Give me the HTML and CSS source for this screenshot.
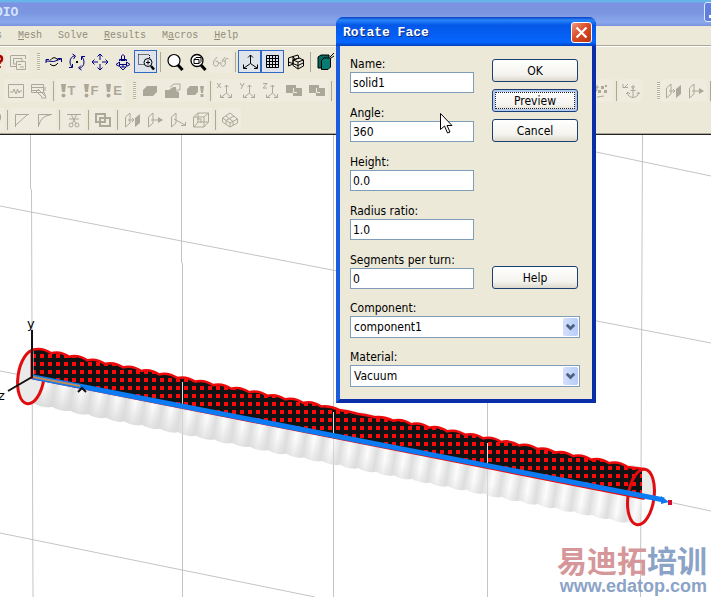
FILE: index.html
```html
<!DOCTYPE html>
<html lang="en">
<head>
<meta charset="utf-8">
<title>Rotate Face</title>
<link rel="stylesheet" href="styles.css">
</head>
<body>
<svg class="sprite" aria-hidden="true">
  <symbol id="i-help" viewBox="0 0 18 18"><path d="M10 6Q10 3 13 3Q16 3 16 6Q16 8 13.500 9V11M13.500 13V15" stroke="#b00000" stroke-width="2.500" fill="none"/></symbol>
  <symbol id="i-windows" viewBox="0 0 18 18"><path d="M1.500 3V13.500H7M1.500 2.500H16.500V6M4.500 5.500H13V9M4.500 5.500V11H7M7.500 8.500H16.500V16.500H7.500ZM9 11.500H12M11 14H15" class="k"/></symbol>
  <symbol id="i-orbit" viewBox="0 0 18 18"><path d="M1 8Q9 10 16 6M12.500 5.500H16.500V9M1 10V6.500H4" class="n"/><path d="M5 7.500Q9 2 13 7M5 11Q9 15 13 10" class="k2"/></symbol>
  <symbol id="i-spin" viewBox="0 0 18 18"><path d="M7 2.500Q2 4 2 9Q2 12 4 14M11 15.500Q16 14 16 9Q16 6 14 4M4.500 1L7.500 3L5.500 6M13 12.500L10.500 15L13.500 17M1 14.500H4.500V11M13.500 7V3.500H17" class="n"/><path d="M8 8H10V10H8Z" fill="#000"/></symbol>
  <symbol id="i-pan" viewBox="0 0 18 18"><path d="M9 1V7M9 11V17M1 9H7M11 9H17M6.500 3.500L9 1L11.500 3.500M6.500 14.500L9 17L11.500 14.500M3.500 6.500L1 9L3.500 11.500M14.500 6.500L17 9L14.500 11.500" class="n"/></symbol>
  <symbol id="i-plane" viewBox="0 0 18 18"><path d="M9 17L6 14H12ZM9 14V12M2 11.500L5.500 9V13.500ZM16 11.500L12.500 9V13.500ZM6 11.500H12M6.500 7.500H11.500M7.500 6V3Q9 0 10.500 3V6M5.500 8V6.500H12.500V8" class="n"/></symbol>
  <symbol id="i-zoombox" viewBox="0 0 18 18"><path d="M1.500 1.500H12M1.500 1.500V11.500H7M12.500 2V5" stroke="#000" stroke-dasharray="1 1" fill="none"/><circle cx="11" cy="9.500" r="4" class="k2"/><path d="M9 9.500H13M11 7.500V11.500" class="k2"/><path d="M14 13L17 16.500" stroke="#000" stroke-width="2.500"/></symbol>
  <symbol id="i-zoom" viewBox="0 0 18 18"><circle cx="8" cy="7.500" r="6" fill="#fff" stroke="#000" stroke-width="1.200"/><path d="M12 12L16.500 17" stroke="#000" stroke-width="3"/></symbol>
  <symbol id="i-zoomall" viewBox="0 0 18 18"><circle cx="8" cy="7.500" r="6" fill="#fff" stroke="#000" stroke-width="1.300"/><path d="M12 12L16.500 17" stroke="#000" stroke-width="3"/><path d="M5 6.500H10V10.500H5ZM5 6.500L7 4.500H12V8.500L10 10.500" class="k2"/></symbol>
  <symbol id="i-glasses" viewBox="0 0 18 18"><path d="M1 9L5 4M3.500 8.500Q6 7 6.500 10Q6 14 3 13Q0 12 2 9M10 8.500Q13 7 13.500 10Q13 14 10 13Q8 12 9 9M6.500 10H8.500M13 9Q13 4 16.500 6M10 8L13 4" class="k"/></symbol>
  <symbol id="i-axes" viewBox="0 0 18 18"><path d="M9.500 2V10.500L3 15M9.500 10.500L16 15M7 4.500L9.500 2L12 4.500M2.500 11.500V15.500H6M16.500 11.500V15.500H13" class="k2"/></symbol>
  <symbol id="i-grid" viewBox="0 0 18 18"><path d="M2.500 2.500H14.500V14.500H2.500ZM5.500 2V15M8.500 2V15M11.500 2V15M2 5.500H15M2 8.500H15M2 11.500H15" class="k2"/></symbol>
  <symbol id="i-cube" viewBox="0 0 18 18"><path d="M1.500 5L6 3.500V11L1.500 13ZM6 3.500L11 2L12 5L8 6.500ZM6 7L12 5L16.500 7V13L11 16L6 12.500ZM11 9V16M6 7L11 9L16.500 7M1.500 9L11 12.500L16 10" class="k2"/></symbol>
  <symbol id="i-solidcut" viewBox="0 0 18 18"><path d="M2 4L5 2H13V11L11 15H2Z" fill="#00675f" stroke="#000"/><path d="M5.500 7.500L8 5H14.500V14L12 16.500H5.500Z" fill="#087b72" stroke="#000"/><path d="M14 4L18 0M15 5L18 3" class="k2"/></symbol>
  <symbol id="i-wave" viewBox="0 0 18 18"><path d="M1.500 2.500H16.500V15.500H1.500ZM3 10H6L7 7L9 12L10.500 7L12 11L13 9H15" class="k"/></symbol>
  <symbol id="i-probe" viewBox="0 0 18 18"><path d="M1.500 2.500H13.500V10.500H1.500ZM2 5.500H13M2 8.500H10M8 7L15 14M6 9L12 15M14 10L16 16L11 16M15 5V9" class="k"/></symbol>
  <symbol id="i-bang" viewBox="0 0 7 18"><path d="M1 2H6L5 10H2Z" class="f"/><circle cx="3.500" cy="13.500" r="2" class="f"/></symbol>
  <symbol id="i-brick" viewBox="0 0 18 18"><path d="M2 8L6 4H16V10L12 14H2Z" class="f"/></symbol>
  <symbol id="i-brickedit" viewBox="0 0 18 18"><path d="M1 8H5L9 5H12V9L15 10V16H1Z" class="f"/><path d="M6 5L10 2H16V8L12 8" class="k"/></symbol>
  <symbol id="i-brickbang" viewBox="0 0 18 18"><path d="M0 7L3 4H11V10L8 13H0ZM13 4H17L16 11H14ZM13.500 12H16.500V15H13.500Z" class="f"/></symbol>
  <symbol id="i-ax" viewBox="0 0 18 18"><path d="M10.500 3V11L5 15.500M10.500 11L15 15.500M8.500 5L10.500 3L12.500 5M4.500 12.500V15.500H8M12 15.500H15.500V12" class="k"/></symbol>
  <symbol id="i-x" viewBox="0 0 18 18"><path d="M1 1L5 6M5 1L1 6" class="k"/><use href="#i-ax"/></symbol>
  <symbol id="i-y" viewBox="0 0 18 18"><path d="M1 1L3 4M5 1L2 7" class="k"/><use href="#i-ax"/></symbol>
  <symbol id="i-z" viewBox="0 0 18 18"><path d="M1 1.500H5L1 6H5" class="k"/><use href="#i-ax"/></symbol>
  <symbol id="i-bool" viewBox="0 0 18 18"><path d="M1 3H11V6H17V14H8V11H1Z" class="f"/><path d="M3 12V15H6M8.500 6V10.500H12" class="w"/></symbol>
  <symbol id="i-points" viewBox="0 0 18 18"><path d="M1 6L6 5M4 3V8L1 12M4 15L11 14" class="k"/><path d="M8 4h3v3h-3zM5 8h3v3h-3zM11 8h3v3h-3zM12 3h2v2h-2z" class="f"/></symbol>
  <symbol id="i-anchor" viewBox="0 0 18 18"><path d="M1 2V6M1 5.500H6M2 6L6 2M11 6V15M8.500 8.500H13.500M5.500 11Q6 15 11 15.500Q16 15 16.500 11M10 4H12V6H10ZM4 12L6 10L8 12M14.500 12L16.500 10L17.500 12" class="k"/></symbol>
  <symbol id="i-chamfer" viewBox="0 0 18 18"><path d="M2.500 16V3.500H16M3 14L14 4" class="k"/></symbol>
  <symbol id="i-blend" viewBox="0 0 18 18"><path d="M2.500 16V3.500H16M3 14Q5 5 14 4" class="k"/></symbol>
  <symbol id="i-cut" viewBox="0 0 18 18"><path d="M2 3.500H16M6 3L11 13M12 3L7 13M4 8H14" class="k"/><circle cx="6" cy="14" r="2" class="k"/><circle cx="12" cy="14" r="2" class="k"/></symbol>
  <symbol id="i-union" viewBox="0 0 18 18"><path d="M2 3H11V11H2ZM6 7H16V15H6Z" class="k b"/></symbol>
  <symbol id="i-extrude" viewBox="0 0 18 18"><path d="M2.500 6L7 2V12L2.500 16ZM5 9H11M9 7L11 9L9 11" class="k"/><path d="M12 7L17 3V12L12 16Z" class="f"/></symbol>
  <symbol id="i-arrow" viewBox="0 0 18 18"><path d="M2.500 6L7 2V12L2.500 16ZM5 9H16" class="k"/><path d="M12 6L17 9L12 12Z" class="f"/></symbol>
  <symbol id="i-arrowdn" viewBox="0 0 18 18"><path d="M2.500 6L7 2V12L2.500 16ZM5 8L16 14M12 14.500H16.500V11" class="k"/></symbol>
  <symbol id="i-box" viewBox="0 0 18 18"><path d="M1.500 6H12V16H1.500ZM1.500 6L6 2H16.500V11L12 16M12 6L16.500 2M6 2V11H16M6 11L2 16M5 8H9V12" class="k"/></symbol>
  <symbol id="i-hex" viewBox="0 0 18 18"><path d="M1.500 7L9 2L16.500 8V12L9 16L1.500 11ZM1.500 7L9 12L16.500 8M9 12V16M5 5L12 10.500V14M13 5L5 9.500V13" class="k"/></symbol>
  <symbol id="i-slash" viewBox="0 0 18 18"><path d="M11 11L17 3V8L13 15Z" class="f"/></symbol>
</svg>

<div class="app">
  <header class="titlebar"><span>DIO</span><button class="winbtn" aria-label="Minimize"></button></header>
  <nav class="menu">
    <a href="#">s</a><a href="#"><u>M</u>esh</a><a href="#">Solve</a><a href="#"><u>R</u>esults</a><a href="#">M<u>a</u>cros</a><a href="#"><u>H</u>elp</a>
  </nav>
  <div class="bars">
    <div class="bar first">
      <button class="tool" aria-label="Context help"><svg><use href="#i-help"/></svg></button>
      <button class="tool off" aria-label="Windows"><svg><use href="#i-windows"/></svg></button>
      <i class="grip"></i>
      <button class="tool" aria-label="Orbit"><svg><use href="#i-orbit"/></svg></button>
      <button class="tool" aria-label="Spin"><svg><use href="#i-spin"/></svg></button>
      <button class="tool" aria-label="Pan"><svg><use href="#i-pan"/></svg></button>
      <button class="tool" aria-label="Move view"><svg><use href="#i-plane"/></svg></button>
      <button class="tool on" aria-label="Zoom area"><svg><use href="#i-zoombox"/></svg></button>
      <i class="sep"></i>
      <button class="tool" aria-label="Zoom"><svg><use href="#i-zoom"/></svg></button>
      <button class="tool" aria-label="Zoom all"><svg><use href="#i-zoomall"/></svg></button>
      <button class="tool off" aria-label="View options"><svg><use href="#i-glasses"/></svg></button>
      <i class="sep"></i>
      <button class="tool on" aria-label="Axes"><svg><use href="#i-axes"/></svg></button>
      <button class="tool on" aria-label="Grid"><svg><use href="#i-grid"/></svg></button>
      <button class="tool" aria-label="Wireframe"><svg><use href="#i-cube"/></svg></button>
      <i class="sep"></i>
      <button class="tool" aria-label="Cutting plane"><svg><use href="#i-solidcut"/></svg></button>
    </div>
    <div class="bar second">
      <button class="tool off" aria-label="Signal"><svg><use href="#i-wave"/></svg></button>
      <button class="tool off" aria-label="Probe"><svg><use href="#i-probe"/></svg></button>
      <i class="sep"></i>
      <button class="tool off solver"><svg><use href="#i-bang"/></svg>T</button>
      <button class="tool off solver"><svg><use href="#i-bang"/></svg>F</button>
      <button class="tool off solver"><svg><use href="#i-bang"/></svg>E</button>
      <i class="grip"></i>
      <button class="tool off" aria-label="Material"><svg><use href="#i-brick"/></svg></button>
      <button class="tool off" aria-label="Edit material"><svg><use href="#i-brickedit"/></svg></button>
      <button class="tool off" aria-label="Check material"><svg><use href="#i-brickbang"/></svg></button>
      <i class="sep"></i>
      <button class="tool off" aria-label="Align x"><svg><use href="#i-x"/></svg></button>
      <button class="tool off" aria-label="Align y"><svg><use href="#i-y"/></svg></button>
      <button class="tool off" aria-label="Align z"><svg><use href="#i-z"/></svg></button>
      <button class="tool off" aria-label="Add"><svg><use href="#i-bool"/></svg></button>
      <button class="tool off" aria-label="Insert"><svg><use href="#i-bool"/></svg></button>
      <i class="sep"></i>
      <i class="gap"></i>
      <button class="tool off" aria-label="Pick points"><svg><use href="#i-points"/></svg></button>
      <i class="sep"></i>
      <button class="tool off" aria-label="Anchor"><svg><use href="#i-anchor"/></svg></button>
      <i class="grip far"></i>
      <button class="tool off" aria-label="Extrude"><svg><use href="#i-extrude"/></svg></button>
      <button class="tool off" aria-label="Move face"><svg><use href="#i-arrow"/></svg></button>
      <i class="sep"></i>
    </div>
    <div class="bar third">
      <button class="tool off" aria-label="Face"><svg><use href="#i-slash"/></svg></button>
      <i class="sep"></i>
      <button class="tool off" aria-label="Chamfer"><svg><use href="#i-chamfer"/></svg></button>
      <button class="tool off" aria-label="Blend"><svg><use href="#i-blend"/></svg></button>
      <i class="sep"></i>
      <button class="tool off" aria-label="Trim"><svg><use href="#i-cut"/></svg></button>
      <i class="sep"></i>
      <button class="tool off" aria-label="Union"><svg><use href="#i-union"/></svg></button>
      <i class="sep"></i>
      <button class="tool off" aria-label="Extrude curve"><svg><use href="#i-extrude"/></svg></button>
      <button class="tool off" aria-label="Sweep"><svg><use href="#i-arrow"/></svg></button>
      <button class="tool off" aria-label="Project"><svg><use href="#i-arrowdn"/></svg></button>
      <button class="tool off" aria-label="Box"><svg><use href="#i-box"/></svg></button>
      <i class="sep"></i>
      <button class="tool off" aria-label="Shell"><svg><use href="#i-hex"/></svg></button>
    </div>
  </div>

  <main class="view">
    <svg class="scene" viewBox="0 135 711 462" preserveAspectRatio="xMinYMin slice">
      <defs>
        <pattern id="dots" patternUnits="userSpaceOnUse" x="39" y="353" width="8" height="8"><rect width="8" height="8" fill="#121212"/><rect x="1" y="1" width="4" height="4" fill="#f80c0c"/></pattern>
        <linearGradient id="ribs" gradientUnits="userSpaceOnUse" x1="34" y1="400" x2="52" y2="403" spreadMethod="repeat"><stop offset="0" stop-color="#dedede"/><stop offset=".5" stop-color="#fcfcfc"/><stop offset="1" stop-color="#dedede"/></linearGradient>
        <linearGradient id="shade" gradientUnits="userSpaceOnUse" x1="100" y1="394" x2="94" y2="420"><stop offset="0" stop-color="#ddd" stop-opacity="0"/><stop offset="1" stop-color="#d6d6d6" stop-opacity=".85"/></linearGradient>
        <path id="tube" d="M34 348L642 467L640 524L628 522q-9 2 -18 -3.600q-9 2 -18 -3.600q-9 2 -18 -3.600q-9 2 -18 -3.600q-9 2 -18 -3.600q-9 2 -18 -3.600q-9 2 -18 -3.600q-9 2 -18 -3.600q-9 2 -18 -3.600q-9 2 -18 -3.600q-9 2 -18 -3.600q-9 2 -18 -3.600q-9 2 -18 -3.600q-9 2 -18 -3.600q-9 2 -18 -3.600q-9 2 -18 -3.600q-9 2 -18 -3.600q-9 2 -18 -3.600q-9 2 -18 -3.600q-9 2 -18 -3.600q-9 2 -18 -3.600q-9 2 -18 -3.600q-9 2 -18 -3.600q-9 2 -18 -3.600q-9 2 -18 -3.600q-9 2 -18 -3.600q-9 2 -18 -3.600q-9 2 -18 -3.600q-9 2 -18 -3.600q-9 2 -18 -3.600q-9 2 -18 -3.600q-9 2 -18 -3.600q-9 2 -18 -3.600Z"/>
        <path id="wave" d="M33 351q9 -2.500 18 3.550q9 -2.500 18 3.550q9 -2.500 18 3.550q9 -2.500 18 3.550q9 -2.500 18 3.550q9 -2.500 18 3.550q9 -2.500 18 3.550q9 -2.500 18 3.550q9 -2.500 18 3.550q9 -2.500 18 3.550q9 -2.500 18 3.550q9 -2.500 18 3.550q9 -2.500 18 3.550q9 -2.500 18 3.550q9 -2.500 18 3.550q9 -2.500 18 3.550q9 -1 18 3.550q9 1 18 3.550q9 1 18 3.550q9 -1 18 3.550q9 -2.500 18 3.550q9 -2.500 18 3.550q9 -2.500 18 3.550q9 -2.500 18 3.550q9 -2.500 18 3.550q9 -2.500 18 3.550q9 -2.500 18 3.550q9 -2.500 18 3.550q9 -2.500 18 3.550q9 -2.500 18 3.550q9 -2.500 18 3.550q9 -2.500 18 3.550q9 -2.500 18 3.550L642 470V497L33 377Z"/>
      </defs>
      <g class="mesh">
        <path d="M30.500 135V188L31.500 190L33 597M181.500 135V262L182.500 264V597M333.500 135V597M487.500 135V597M642.500 135L640.500 597"/>
        <path d="M0 206L711 343M0 371L32 377M664 501L711 511M0 533L315 597M596 152L711 176"/>
      </g>
      <use href="#tube" fill="url(#ribs)"/>
      <use href="#tube" fill="url(#shade)"/>
      <path class="mesh" d="M182.500 405V597M333.500 435V597M487.500 465V597" opacity=".6"/>
      <ellipse cx="31" cy="377" rx="13" ry="27" transform="rotate(8 31 377)" class="ring"/>
      <use href="#wave" class="edge"/>
      <use href="#wave" fill="url(#dots)"/>
      <path d="M33 351V377M182.500 382V406M333.500 412V436M487.500 443V466" stroke="#ddd" fill="none"/>
      <path d="M642 470Q654 470 654 488L653 498L642 496Z" fill="#e9e9e9"/>
      <ellipse cx="641" cy="497" rx="13" ry="28" transform="rotate(8 641 497)" class="ring clear"/>
      <path d="M33 377L664 500" stroke="#0b7bf4" stroke-width="5"/>
      <path d="M661 496L669 502L661 504Z" fill="#0b7bf4"/><path d="M668 500h4v5h-4z" fill="#d01030"/>
      <path d="M33 377L80 386" stroke="#c68a55" stroke-width="2"/>
      <path d="M32 330V377L8 391M78 392L82 388L86 392" fill="none" stroke="#111" stroke-width="2"/>
      <text x="27" y="328" class="axis">y</text><text x="-2" y="400" class="axis">z</text>
    </svg>
    <div class="brand"><div class="cn">易迪拓<span>培训</span></div><div class="url">www.edatop.com</div></div>
  </main>

  <form class="dialog">
    <div class="dtitle"><span>Rotate Face</span><button type="button" class="close" aria-label="Close"><svg viewBox="0 0 21 21"><path d="M5 5L16 16M16 5L5 16" stroke="#fff" stroke-width="2.500"/></svg></button></div>
    <div class="dbody">
      <div class="fields">
        <div class="field"><label for="name">Name:</label><input id="name" value="solid1"></div>
        <div class="field"><label for="angle">Angle:</label><input id="angle" value="360"></div>
        <div class="field"><label for="height">Height:</label><input id="height" value="0.0"></div>
        <div class="field"><label for="ratio">Radius ratio:</label><input id="ratio" value="1.0"></div>
        <div class="field"><label for="segs">Segments per turn:</label><input id="segs" value="0"></div>
      </div>
      <div class="actions">
        <button type="button">OK</button><button type="button" class="focus">Preview</button><button type="button">Cancel</button><button type="button" class="help">Help</button>
      </div>
      <div class="field wide"><label for="comp">Component:</label><div class="pick"><select id="comp"><option>component1</option></select><svg viewBox="0 0 16 19"><path d="M4 7L8 11L12 7" fill="none" stroke="#4d6185" stroke-width="3"/></svg></div></div>
      <div class="field wide"><label for="mat">Material:</label><div class="pick"><select id="mat"><option>Vacuum</option></select><svg viewBox="0 0 16 19"><path d="M4 7L8 11L12 7" fill="none" stroke="#4d6185" stroke-width="3"/></svg></div></div>
    </div>
    <svg class="cursor" viewBox="0 0 13 21"><path d="M.5 .5V16.500L4.500 13L7.500 20L10 19L7 12.500H12Z" fill="#fff" stroke="#000"/></svg>
  </form>
</div>
</body>
</html>
```
FILE: styles.css
```css
* { box-sizing: border-box; }
body { margin: 0; background: #fff; font-family: "DejaVu Sans Condensed", "DejaVu Sans", sans-serif; font-size: 12px; color: #000; }
button, input, select { font: inherit; color: inherit; margin: 0; }
.sprite { display: none; }
.app { position: relative; display: flex; flex-direction: column; height: 100vh; overflow: hidden; }

.titlebar { flex: none; display: flex; justify-content: space-between; height: 26px; color: #d6e4ff; background: linear-gradient(#67b5e8 0 2px, #7d92e2 3px, #7a96df 50%, #8ba8ee 22px, #7893dc); font: bold 13px/25px "Liberation Mono", monospace; overflow: hidden; }
.titlebar span { margin-left: -5px; }
.winbtn { flex: none; width: 21px; height: 20px; margin: 2px -14px 0 0; border: 1px solid #dfe8ff; border-radius: 3px; background: linear-gradient(#fff, #fff) 4px 12px / 7px 3px no-repeat #5f80e0; }

.menu { flex: none; display: flex; gap: 16px; height: 21px; padding: 0; background: #ece9d8; border-bottom: 1px solid #fff; box-shadow: inset 0 -1px #aca899; font: 10px/20px "Liberation Mono", monospace; }
.menu a { color: #8f8c7c; text-decoration: none; }
.menu a:first-child { margin-left: -4px; }

.bars { flex: none; background: #ece9d8; border-bottom: 1px solid #222; box-shadow: inset 0 -1px #aca899; }
.bar { display: flex; align-items: center; height: 29px; overflow: hidden; }
.first { margin-left: -17px; }
.second { margin-left: 4px; }
.third { margin-left: -19px; }
.tool { flex: none; display: flex; align-items: center; justify-content: center; width: 23px; height: 23px; padding: 0; border: 1px solid transparent; background: none; --ink: #000; }
.tool svg { flex: none; width: 18px; height: 18px; overflow: hidden; }
.off { background: #efecdf; color: #aca899; --ink: #aca899; }
.on { border-color: #316ac5; background: #dfe4ec; }
.tool.solver { gap: 1px; font: bold 13px "Liberation Sans", sans-serif; }
.tool.solver svg { width: 7px; }
.sep { flex: none; width: 6px; height: 20px; background: linear-gradient(#aca899, #aca899) center / 1px 100% no-repeat; }
.grip { flex: none; width: 13px; height: 18px; background: repeating-linear-gradient(#b5b1a0 0 1px, #f5f3e8 1px 2px) 8px 0 / 3px 100% no-repeat; }
.grip.far { width: 19px; background-position: 15px 0; }
.gap { flex: none; width: 256px; }
.k { fill: none; stroke: var(--ink); }
.b { stroke-width: 2; }
.k2 { fill: none; stroke: #000; }
.n { fill: none; stroke: #000080; }
.f { fill: var(--ink); }
.w { fill: none; stroke: #efecdf; }

.view { position: relative; flex: 1; min-height: 0; background: #fff; overflow: hidden; }
.scene { display: block; width: 100%; height: 100%; }
.mesh { fill: none; stroke: #c4c4c4; }
.edge { fill: none; stroke: #ee0a0a; stroke-width: 5; }
.ring { fill: #eaeaea; stroke: #e00c10; stroke-width: 3; }
.clear { fill: none; }
.axis { font: 13px "DejaVu Sans", sans-serif; }
.brand { position: absolute; right: 4px; bottom: 0; text-align: right; font-weight: bold; color: #8ba3c7; }
.cn { font: bold 30px/32px "Noto Sans CJK SC", sans-serif; color: #d59799; }
.cn span { color: #8ba3c7; }
.url { font: bold 18px/22px "Liberation Sans", sans-serif; }

.dialog { position: absolute; left: 336px; top: 17px; width: 260px; border: 4px solid; border-color: #0a48d8 #0a2ea8 #0a2ea8 #1a5ce0; border-top: 0; border-radius: 8px 8px 0 0; background: #ece9d8; }
.dtitle { display: flex; align-items: center; justify-content: space-between; height: 29px; margin: 0 -4px; padding: 2px 4px 0 7px; border-radius: 7px 7px 0 0; background: linear-gradient(#0a3fc0, #2a86fa 3px, #0458e8 8px, #0560f5 20px, #0668ff 25px, #0440c0); color: #fff; font: bold 13px/26px "Liberation Mono", monospace; text-shadow: 1px 1px #0a2a80; }
.close { width: 21px; height: 21px; padding: 0; border: 1px solid #fff; border-radius: 3px; background: linear-gradient(135deg, #f09a80, #dc4c28 45%, #b83410); }
.close svg { display: block; width: 19px; height: 19px; }
.dbody { display: grid; grid-template-columns: 124px 1fr; column-gap: 18px; padding: 10px 12px 12px 10px; }
.fields { display: flex; flex-direction: column; gap: 12px; }
.field { display: flex; flex-direction: column; }
.field label { height: 16px; line-height: 16px; }
.field input { width: 100%; height: 21px; padding: 0 2px; border: 1px solid #7f9db9; background: #fff; }
.wide { grid-column: 1 / -1; margin-top: 11px; }
.pick { position: relative; }
.pick select { display: block; width: 100%; height: 22px; padding: 0 3px; appearance: none; border: 1px solid #7f9db9; border-radius: 0; background: #fff; }
.pick svg { position: absolute; right: 2px; top: 2px; width: 15px; height: 18px; border-radius: 2px; background: linear-gradient(90deg, #d3e0fe, #b8ccf8); pointer-events: none; }
.actions { display: flex; flex-direction: column; gap: 7px; padding: 3px 2px 0 0; }
.actions button { height: 23px; padding: 0; border: 1px solid #1c3f72; border-radius: 3px; background: linear-gradient(#fff, #f4f3ee 70%, #dcd8cc); }
.actions .focus { box-shadow: inset 0 0 0 2px #b4caf0; outline: 1px dotted #222; outline-offset: -4px; }
.actions .help { margin-top: auto; }
.cursor { position: absolute; left: 100px; top: 96px; width: 13px; height: 21px; }
```
